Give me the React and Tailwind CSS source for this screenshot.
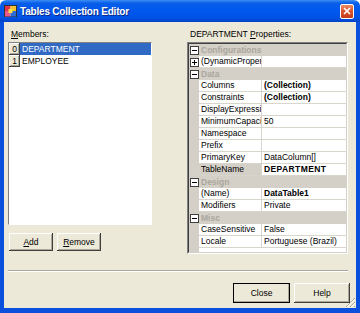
import React from 'react';

const propRows = [
  { cat: 'Configurations' },
  { name: '(DynamicProperti', value: '', plus: true },
  { cat: 'Data' },
  { name: 'Columns', value: '(Collection)', bold: true },
  { name: 'Constraints', value: '(Collection)', bold: true },
  { name: 'DisplayExpressio', value: '' },
  { name: 'MinimumCapacity', value: '50' },
  { name: 'Namespace', value: '' },
  { name: 'Prefix', value: '' },
  { name: 'PrimaryKey', value: 'DataColumn[]' },
  { name: 'TableName', value: 'DEPARTMENT', bold: true, selected: true },
  { cat: 'Design' },
  { name: '(Name)', value: 'DataTable1', bold: true },
  { name: 'Modifiers', value: 'Private' },
  { cat: 'Misc' },
  { name: 'CaseSensitive', value: 'False' },
  { name: 'Locale', value: 'Portuguese (Brazil)' },
];

const raised =
  'bg-[#ece9d8] shadow-[inset_-1px_-1px_#404040,inset_1px_1px_#ffffff,inset_-2px_-2px_#aca899]';

function ExpandBox({ plus }) {
  return (
    <svg width="9" height="9" viewBox="0 0 9 9" className="block">
      <rect x="0.5" y="0.5" width="8" height="8" fill="#fff" stroke="#404040" />
      <line x1="2" y1="4.5" x2="7" y2="4.5" stroke="#000" />
      {plus && <line x1="4.5" y1="2" x2="4.5" y2="7" stroke="#000" />}
    </svg>
  );
}

function PropRow({ row }) {
  if (row.cat) {
    return (
      <div className="flex h-[12px] items-center bg-[#d4d0c8]">
        <div className="flex w-[10px] justify-center">
          <ExpandBox />
        </div>
        <span className="pl-[2px] font-bold leading-[11px] text-[#aaa79d]">{row.cat}</span>
      </div>
    );
  }
  return (
    <div className="flex h-[12px]">
      <div className="flex w-[10px] items-center justify-center bg-[#d4d0c8]">
        {row.plus && <ExpandBox plus />}
      </div>
      <div
        className={`w-[63px] overflow-hidden whitespace-nowrap border-b border-r border-[#d8d5cc] pl-[2px] leading-[11px] ${
          row.selected ? 'bg-[#d4d0c8]' : 'bg-white'
        }`}
      >
        {row.name}
      </div>
      <div
        className={`flex-1 overflow-hidden whitespace-nowrap border-b border-[#d8d5cc] bg-white pl-[2px] leading-[11px] ${
          row.bold ? 'font-bold' : ''
        } ${row.selected ? 'tracking-[0.4px]' : ''}`}
      >
        {row.value}
      </div>
    </div>
  );
}

function Button({ children, width, isDefault }) {
  return (
    <div
      className={`flex items-center justify-center ${width} ${raised} ${
        isDefault ? 'outline outline-1 outline-[#000] -outline-offset-1' : ''
      }`}
    >
      {children}
    </div>
  );
}

export default function App() {
  return (
    <div className="flex h-[313px] w-[360px] flex-col overflow-hidden rounded-t-[6px] bg-white font-['Liberation_Sans',Arial,sans-serif] text-[8.5px] text-black">
      {/* Title bar */}
      <div className="flex h-[22px] shrink-0 items-center bg-[linear-gradient(to_bottom,#3d8ff5_0%,#0a5ee8_14%,#0058ee_45%,#0053e4_80%,#0043c9_100%)] pl-[4px] pr-[6px]">
        <svg width="13" height="12" viewBox="0 0 13 12" className="shrink-0">
          <rect x="0.5" y="0.5" width="12" height="11" fill="#fff" stroke="#333" />
          <rect x="1" y="1" width="5.5" height="5" fill="#e0344a" />
          <rect x="6.5" y="1" width="5.5" height="5" fill="#f4c430" />
          <rect x="1" y="6" width="5.5" height="5.5" fill="#e85a8c" />
          <rect x="6.5" y="6" width="5.5" height="5.5" fill="#2d6bd8" />
          <rect x="4.5" y="4" width="4" height="4" fill="#f7e04a" />
        </svg>
        <span className="ml-[3px] flex-1 text-[10px] font-bold tracking-[-0.2px] text-white [text-shadow:1px_1px_#0a2a8a]">
          Tables Collection Editor
        </span>
        <div className="flex h-[15px] w-[14px] items-center justify-center rounded-[2px] border border-white bg-[linear-gradient(to_bottom,#ec8a67,#d8532c_50%,#c33c1c)]">
          <svg width="8" height="8" viewBox="0 0 8 8">
            <path d="M1 1 L7 7 M7 1 L1 7" stroke="#fff" strokeWidth="1.6" />
          </svg>
        </div>
      </div>

      {/* Body */}
      <div className="relative flex flex-1 flex-col border-x-4 border-b-[5px] border-[#0a50dd] bg-[#ece9d8]">
        <div className="flex gap-[35px] pl-[4px] pt-[6px]">
          {/* Members */}
          <div className="flex w-[144px] flex-col">
            <div className="h-[14px] pl-[3px] leading-[12px]">
              <span className="underline">M</span>embers:
            </div>
            <div className="h-[183px] border border-b-white border-l-[#808080] border-r-white border-t-[#808080] bg-white">
              <div className="flex h-[12px]">
                <div className={`w-[11px] text-center leading-[12px] ${raised}`}>0</div>
                <div className="flex-1 bg-[#316ac5] pl-[2px] leading-[12px] text-white">DEPARTMENT</div>
              </div>
              <div className="flex h-[12px]">
                <div className={`w-[11px] text-center leading-[12px] ${raised}`}>1</div>
                <div className="flex-1 pl-[2px] leading-[12px]">EMPLOYEE</div>
              </div>
            </div>
            <div className="mt-[8px] flex h-[18px] gap-[4px] pl-px">
              <Button width="w-[44px]">
                <span className="underline">A</span>dd
              </Button>
              <Button width="w-[44px]">
                <span className="underline">R</span>emove
              </Button>
            </div>
          </div>

          {/* Properties */}
          <div className="flex w-[161px] flex-col">
            <div className="h-[14px] pl-[3px] leading-[12px]">
              DEPARTMENT <span className="underline">P</span>roperties:
            </div>
            <div className="h-[212px] border border-b-white border-l-[#808080] border-r-white border-t-[#808080]">
              <div className="h-full border border-b-[#d4d0c8] border-l-[#404040] border-r-[#d4d0c8] border-t-[#404040] bg-white">
                {propRows.map((row, i) => (
                  <PropRow key={i} row={row} />
                ))}
                <div className="flex h-[4px]">
                  <div className="w-[10px] bg-[#d4d0c8]" />
                </div>
              </div>
            </div>
          </div>
        </div>

        {/* Separator */}
        <div className="ml-[4px] mt-[16px] w-[340px] border-b border-t border-b-white border-t-[#aca899]" />

        <div className="mt-[11px] flex justify-end gap-[4px] pr-[6px]">
          <div className="h-[20px]">
            <Button width="h-[20px] w-[57px]" isDefault>
              Close
            </Button>
          </div>
          <Button width="h-[20px] w-[56px]">Help</Button>
        </div>

        <svg width="11" height="11" viewBox="0 0 11 11" className="absolute bottom-0 right-0">
          <path d="M10 1 L1 10 M10 5 L5 10 M10 9 L9 10" stroke="#aca899" strokeWidth="1" />
          <path d="M10 2 L2 10 M10 6 L6 10" stroke="#fff" strokeWidth="1" />
        </svg>
      </div>
    </div>
  );
}
